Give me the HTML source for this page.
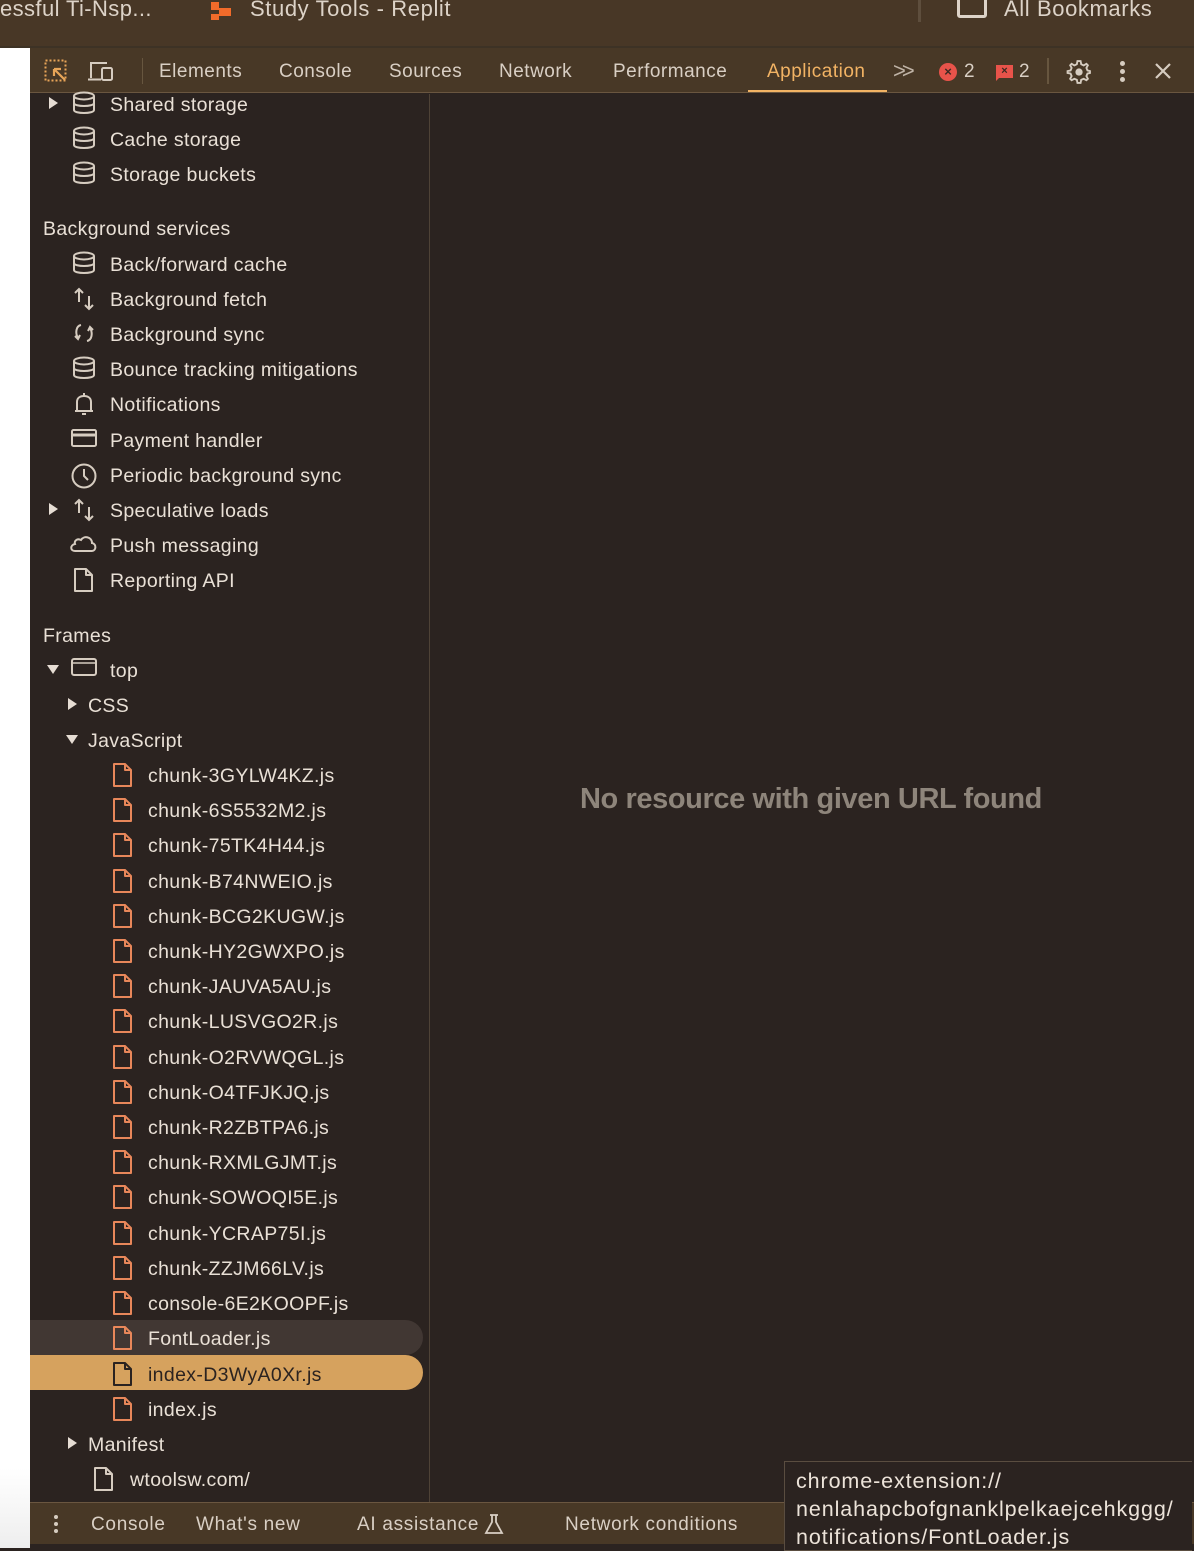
<!DOCTYPE html>
<html><head><meta charset="utf-8">
<style>
*{margin:0;padding:0;box-sizing:border-box}
body{width:1194px;height:1548px;overflow:hidden;background:#2b2320;font-family:"Liberation Sans",sans-serif;color:#e6ddd4;position:relative}
.a{position:absolute}
.r{position:absolute;height:26px;line-height:26px;font-size:19.5px;letter-spacing:0.35px;white-space:nowrap;color:#e9e0d6}
.ic{position:absolute}
.tab{position:absolute;top:59px;font-size:19px;letter-spacing:0.5px;color:#d9cfc4;line-height:26px}
svg{display:block}
</style></head><body>
<div class="a" style="left:0;top:0;width:1194px;height:48px;background:#483726"></div>
<div class="a" style="left:0;top:46px;width:1194px;height:2px;background:#3d3225"></div>
<div class="a" style="left:0;top:-6px;font-size:22px;letter-spacing:0.4px;color:#ddd3c8;line-height:30px">essful Ti-Nsp...</div>
<div class="a" style="left:211px;top:2px;width:8px;height:8px;background:#f26b2a"></div>
<div class="a" style="left:219px;top:8px;width:12px;height:8px;background:#f26b2a"></div>
<div class="a" style="left:211px;top:14px;width:8px;height:6px;background:#f26b2a"></div>
<div class="a" style="left:250px;top:-6px;font-size:22px;letter-spacing:0.6px;color:#ddd3c8;line-height:30px">Study Tools - Replit</div>
<div class="a" style="left:918px;top:0;width:3px;height:22px;background:#5e4e3d"></div>
<div class="a" style="left:957px;top:-4px;width:30px;height:22px;border:3px solid #ddd3c8;border-radius:3px"></div>
<div class="a" style="left:1004px;top:-6px;font-size:22px;letter-spacing:0.6px;color:#ddd3c8;line-height:30px">All Bookmarks</div>
<div class="a" style="left:0;top:48px;width:30px;height:1500px;background:linear-gradient(#fff 0,#fff 1420px,#e4e4e4 1548px)"></div>
<div class="a" style="left:30px;top:48px;width:1164px;height:45px;background:#483826;border-bottom:1px solid #6a5640"></div>
<div class="ic" style="left:44px;top:59px"><svg width="26" height="24" viewBox="0 0 26 24"><rect x="1.5" y="1.5" width="20" height="20" fill="none" stroke="#e8a558" stroke-width="2" stroke-dasharray="2 2"/><path d="M10 10 L21 21 M10 10 L10 17 M10 10 L17 10" stroke="#e8a558" stroke-width="2.2" fill="none"/></svg></div>
<div class="ic" style="left:87px;top:60px"><svg width="28" height="22" viewBox="0 0 28 22"><path d="M4 18 V3 H20 M1 19.5 H14" stroke="#d6ccc0" stroke-width="2" fill="none"/><rect x="15" y="8" width="10" height="12" rx="1.5" fill="none" stroke="#d6ccc0" stroke-width="2"/></svg></div>
<div class="a" style="left:142px;top:58px;width:1px;height:26px;background:#67563f"></div>
<div class="tab" style="left:159px">Elements</div>
<div class="tab" style="left:279px">Console</div>
<div class="tab" style="left:389px">Sources</div>
<div class="tab" style="left:499px">Network</div>
<div class="tab" style="left:613px">Performance</div>
<div class="tab" style="left:767px;color:#f2b364">Application</div>
<div class="a" style="left:748px;top:90px;width:139px;height:2px;background:#f2b364"></div>
<div class="a" style="left:893px;top:58px;font-size:22px;color:#bfb3a6;line-height:26px;letter-spacing:-4px">&gt;&gt;</div>
<div class="a" style="left:939px;top:63px;width:18px;height:18px;border-radius:50%;background:#e8534a;color:#3a2a22;font-size:13px;line-height:18px;text-align:center;font-weight:bold">×</div>
<div class="tab" style="left:964px;color:#d9cfc4">2</div>
<div class="a" style="left:996px;top:65px;width:17px;height:13px;background:#e8534a;color:#3a2a22;font-size:11px;line-height:13px;text-align:center;font-weight:bold">×</div>
<div class="a" style="left:996px;top:77px;width:0;height:0;border-left:4px solid #e8534a;border-bottom:4px solid transparent"></div>
<div class="tab" style="left:1019px;color:#d9cfc4">2</div>
<div class="a" style="left:1047px;top:58px;width:2px;height:26px;background:#67563f"></div>
<div class="ic" style="left:1066px;top:59px"><svg width="25" height="25" viewBox="0 0 24 24"><path d="M12 2 L14 2 L14.6 5 L17 6.2 L19.6 4.6 L21 6 L19.6 8.6 L20.6 11 L23 11.6 L23 13.4 L20.6 14 L19.6 16.4 L21 19 L19.6 20.4 L17 19 L14.6 20 L14 23 L11 23 L10.4 20 L8 19 L5.4 20.4 L4 19 L5.4 16.4 L4.4 14 L1.5 13.4 L1.5 11.6 L4.4 11 L5.4 8.6 L4 6 L5.4 4.6 L8 6.2 L10.4 5 L11 2 Z" fill="none" stroke="#d6ccc0" stroke-width="1.8"/><circle cx="12.5" cy="12.5" r="3.5" fill="#d6ccc0"/></svg></div>
<div class="a" style="left:1120px;top:61px;width:5px;height:5px;border-radius:50%;background:#d6ccc0"></div>
<div class="a" style="left:1120px;top:69px;width:5px;height:5px;border-radius:50%;background:#d6ccc0"></div>
<div class="a" style="left:1120px;top:77px;width:5px;height:5px;border-radius:50%;background:#d6ccc0"></div>
<div class="ic" style="left:1154px;top:62px"><svg width="18" height="18"><path d="M2 2 L16 16 M16 2 L2 16" stroke="#d6ccc0" stroke-width="2.2"/></svg></div>
<div class="a" style="left:429px;top:94px;width:1px;height:1408px;background:#4e4236"></div>
<div class="a" style="left:30px;top:1320px;width:393px;height:35px;background:#413733;border-radius:0 18px 18px 0"></div>
<div class="a" style="left:30px;top:1355px;width:393px;height:35px;background:#d6a25e;border-radius:0 18px 18px 0"></div>

<div id="side"></div>

<div class="a" style="left:580px;top:782px;font-size:29px;font-weight:bold;color:#8e857b;line-height:34px;letter-spacing:-0.4px">No resource with given URL found</div>

<div class="a" style="left:30px;top:1502px;width:1164px;height:42px;background:#483826;border-top:1px solid #6a5640"></div>
<div class="a" style="left:30px;top:1544px;width:1164px;height:4px;background:#2b2320"></div>
<div class="a" style="left:54px;top:1515px;width:4px;height:4px;border-radius:50%;background:#d6ccc0"></div>
<div class="a" style="left:54px;top:1522px;width:4px;height:4px;border-radius:50%;background:#d6ccc0"></div>
<div class="a" style="left:54px;top:1529px;width:4px;height:4px;border-radius:50%;background:#d6ccc0"></div>
<div class="a" style="left:91px;top:1512px;font-size:19px;letter-spacing:0.7px;color:#d9cfc4;line-height:26px">Console</div>
<div class="a" style="left:196px;top:1512px;font-size:19px;letter-spacing:0.7px;color:#d9cfc4;line-height:26px">What's new</div>
<div class="a" style="left:357px;top:1512px;font-size:19px;letter-spacing:0.7px;color:#d9cfc4;line-height:26px">AI assistance</div>
<div class="ic" style="left:484px;top:1513px"><svg width="20" height="22"><path d="M6 2 H14 M8 2 V9 L2 20 H18 L12 9 V2" fill="none" stroke="#d9cfc4" stroke-width="1.8"/></svg></div>
<div class="a" style="left:565px;top:1512px;font-size:19px;letter-spacing:0.7px;color:#d9cfc4;line-height:26px">Network conditions</div>
<div class="a" style="left:784px;top:1461px;width:408px;height:90px;background:#2b2320;border:1px solid #5a4d40;border-right:none"></div>
<div class="a" style="left:796px;top:1467px;font-size:21.5px;letter-spacing:0.9px;color:#ece3d9;line-height:28px;white-space:nowrap">chrome-extension://<br>nenlahapcbofgnanklpelkaejcehkggg/<br>notifications/FontLoader.js</div>

<script>
var C='#d6ccc0',O='#e8875a';
var db='<svg width="26" height="24" viewBox="0 0 26 24"><ellipse cx="13" cy="5" rx="10" ry="3.5" fill="none" stroke="'+C+'" stroke-width="2"/><path d="M3 5 V19 C3 23 23 23 23 19 V5 M3 12 C3 16 23 16 23 12" fill="none" stroke="'+C+'" stroke-width="2"/></svg>';
var updown='<svg width="26" height="26" viewBox="0 0 26 26"><path d="M8 16 V3 M4 7 L8 3 L12 7 M18 10 V23 M14 19 L18 23 L22 19" fill="none" stroke="'+C+'" stroke-width="2"/></svg>';
var sync='<svg width="26" height="24" viewBox="0 0 26 24"><path d="M10 4 C5 5 4 12 7 17 M16 20 C21 19 22 12 19 7 M4 15 L7 18 L9 14 M22 9 L19 6 L17 10" fill="none" stroke="'+C+'" stroke-width="2"/></svg>';
var bell='<svg width="26" height="26" viewBox="0 0 26 26"><path d="M6 20 V11 C6 7 9 5 13 5 C17 5 20 7 20 11 V20 Z M4 20 H22 M13 2 V5 M11 23 H15" fill="none" stroke="'+C+'" stroke-width="2"/></svg>';
var card='<svg width="28" height="22" viewBox="0 0 28 22"><rect x="2" y="3" width="24" height="16" rx="1.5" fill="none" stroke="'+C+'" stroke-width="2"/><path d="M2 8 H26" stroke="'+C+'" stroke-width="3"/></svg>';
var clock='<svg width="28" height="28" viewBox="0 0 28 28"><circle cx="14" cy="14" r="11.5" fill="none" stroke="'+C+'" stroke-width="2"/><path d="M14 7 V14 L18 18" fill="none" stroke="'+C+'" stroke-width="2"/></svg>';
var cloud='<svg width="30" height="22" viewBox="0 0 30 22"><path d="M7 19 H24 C28 19 29 12 24 11 C24 5 16 3 13 8 C9 6 6 9 7 12 C2 13 2 19 7 19 Z" fill="none" stroke="'+C+'" stroke-width="2"/></svg>';
function file(col){return '<svg width="22" height="26" viewBox="0 0 22 26"><path d="M2 2 H13 L19 8 V24 H2 Z M13 2 V8 H19" fill="none" stroke="'+col+'" stroke-width="2" stroke-linejoin="round"/></svg>';}
var frame='<svg width="28" height="20" viewBox="0 0 28 20"><rect x="2" y="2" width="24" height="16" rx="2" fill="none" stroke="'+C+'" stroke-width="2"/><path d="M2 6 H26" stroke="'+C+'" stroke-width="1.5"/></svg>';
var tri='<div style="width:0;height:0;border-top:6px solid transparent;border-bottom:6px solid transparent;border-left:9px solid #e6ddd4"></div>';
var trid='<div style="width:0;height:0;border-left:6px solid transparent;border-right:6px solid transparent;border-top:9px solid #e6ddd4"></div>';
var h='';
function row(y,x,t,icon,ix,arrow,ax,col){
 if(arrow) h+='<div class="ic" style="left:'+ax+'px;top:'+(y-(arrow==trid?4:6))+'px">'+arrow+'</div>';
 if(icon) h+='<div class="ic" style="left:'+ix+'px;top:'+(y-12)+'px">'+icon+'</div>';
 h+='<div class="r" style="left:'+x+'px;top:'+(y-11)+'px'+(col?';color:'+col:'')+'">'+t+'</div>';
}
row(103,110,'Shared storage',db,71,tri,49);
row(138,110,'Cache storage',db,71);
row(173,110,'Storage buckets',db,71);
row(227,43,'Background services');
row(263,110,'Back/forward cache',db,71);
row(298,110,'Background fetch',updown,71);
row(333,110,'Background sync',sync,71);
row(368,110,'Bounce tracking mitigations',db,71);
row(403,110,'Notifications',bell,71);
row(439,110,'Payment handler',card,70);
row(474,110,'Periodic background sync',clock,70);
row(509,110,'Speculative loads',updown,71,tri,49);
row(544,110,'Push messaging',cloud,68);
row(579,110,'Reporting API',file(C),73);
row(634,43,'Frames');
row(669,110,'top',frame,70,trid,47);
row(704,88,'CSS',null,0,tri,68);
row(739,88,'JavaScript',null,0,trid,66);
var ch=['chunk-3GYLW4KZ.js','chunk-6S5532M2.js','chunk-75TK4H44.js','chunk-B74NWEIO.js','chunk-BCG2KUGW.js','chunk-HY2GWXPO.js','chunk-JAUVA5AU.js','chunk-LUSVGO2R.js','chunk-O2RVWQGL.js','chunk-O4TFJKJQ.js','chunk-R2ZBTPA6.js','chunk-RXMLGJMT.js','chunk-SOWOQI5E.js','chunk-YCRAP75I.js','chunk-ZZJM66LV.js','console-6E2KOOPF.js','FontLoader.js'];
for(var i=0;i<ch.length;i++){row(Math.round(774+i*35.2),148,ch[i],file(O),112);}
row(1373,148,'index-D3WyA0Xr.js',file('#2b2320'),112,null,0,'#2b2320');
row(1408,148,'index.js',file(O),112);
row(1443,88,'Manifest',null,0,tri,68);
row(1478,130,'wtoolsw.com/',file(C),93);
document.getElementById('side').innerHTML=h;
</script>
</body></html>
